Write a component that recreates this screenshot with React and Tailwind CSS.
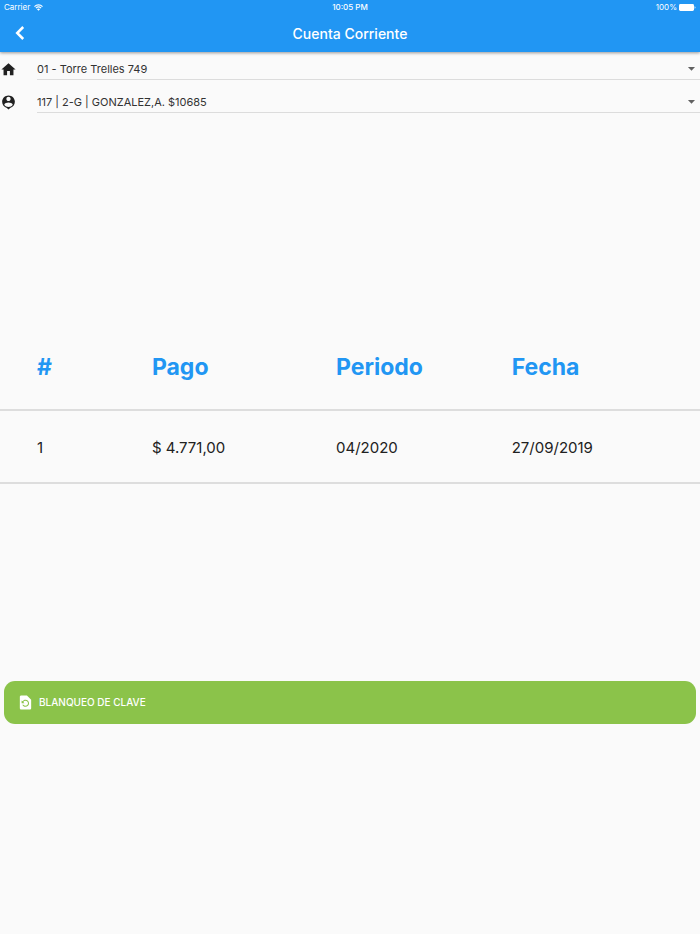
import { useState } from 'react';
import { MdArrowDropDown, MdHome, MdRestorePage } from 'react-icons/md';

const buildings = [{ id: '01', label: '01 - Torre Trelles 749' }];
const units = [{ id: '117', label: '117 | 2-G | GONZALEZ,A. $10685' }];
const payments = [{ id: 1, amount: '$ 4.771,00', period: '04/2020', date: '27/09/2019' }];

function PersonPinIcon({ className }) {
  return (
    <svg className={className} viewBox="0 0 24 24" fill="currentColor" aria-hidden="true">
      <path d="M12 2c-4.97 0-9 4.03-9 9 0 4.17 2.84 7.67 6.69 8.69L12 22l2.31-2.31C18.16 18.67 21 15.17 21 11c0-4.97-4.03-9-9-9zm0 2c1.66 0 3 1.34 3 3s-1.34 3-3 3-3-1.34-3-3 1.34-3 3-3zm0 14.3c-2.5 0-4.71-1.28-6-3.22.03-1.99 4-3.08 6-3.08 1.99 0 5.97 1.09 6 3.08-1.29 1.94-3.5 3.22-6 3.22z" />
    </svg>
  );
}

function StatusBar() {
  return (
    <div className="grid h-[14px] grid-cols-3 items-center px-1 text-[8px] leading-[14px]">
      <div className="flex items-center gap-1">
        <span>Carrier</span>
        <svg className="h-[7px] w-[9px]" viewBox="0 0 18 14" fill="none" stroke="currentColor" strokeWidth="2.4">
          <path d="M1 5.2C5.5.8 12.5.8 17 5.2M3.8 8.2c3-2.9 7.4-2.9 10.4 0" />
          <path d="M9 13.5 5.9 10.4c1.8-1.7 4.4-1.7 6.2 0z" fill="currentColor" stroke="none" />
        </svg>
      </div>
      <span className="text-center font-medium">10:05 PM</span>
      <div className="flex items-center justify-end gap-[2px]">
        <span>100%</span>
        <svg className="h-[7px] w-[17px]" viewBox="0 0 17 7" fill="currentColor">
          <rect width="15" height="7" rx="1.4" />
          <path d="M15.6 2.2c1.2.5 1.2 2.1 0 2.6z" />
        </svg>
      </div>
    </div>
  );
}

function SelectRow({ icon, label, options, value, onChange }) {
  return (
    <div className="flex items-center">
      <span className="w-[37px] shrink-0 text-[#212121]">{icon}</span>
      <div className="relative flex-1">
        <select
          aria-label={label}
          value={value}
          onChange={(e) => onChange(e.target.value)}
          className="block h-[22px] w-full appearance-none border-b border-[#dcdcdc] bg-transparent pt-px pr-5 text-[11px] text-[#333333] outline-none"
        >
          {options.map((option) => (
            <option key={option.id} value={option.id}>
              {option.label}
            </option>
          ))}
        </select>
        <MdArrowDropDown className="pointer-events-none absolute top-[2px] right-0 size-[17px] text-[#616161]" />
      </div>
    </div>
  );
}

export default function App() {
  const [building, setBuilding] = useState('01');
  const [unit, setUnit] = useState('117');

  return (
    <div className="flex min-h-screen flex-col bg-[#fafafa] font-['Inter',sans-serif] text-[#212121]">
      <header className="relative bg-[#2196f3] text-white shadow-[0_1px_3px_rgba(0,0,0,0.4)]">
        <StatusBar />
        <div className="grid h-[38px] grid-cols-[40px_1fr_40px] items-center">
          <button type="button" aria-label="Volver" className="flex h-full items-center justify-center">
            <svg className="size-[14px]" viewBox="0 0 14 14" fill="none" stroke="currentColor" strokeWidth="2.5">
              <path d="M10.2 1 4.2 7l6 6" />
            </svg>
          </button>
          <h1 className="text-center text-[14px] font-medium">Cuenta Corriente</h1>
        </div>
      </header>

      <main className="flex flex-1 flex-col">
        <div className="flex flex-col gap-[11px] pt-[6px]">
          <SelectRow
            icon={<MdHome className="size-[17px]" />}
            label="Edificio"
            options={buildings}
            value={building}
            onChange={setBuilding}
          />
          <SelectRow
            icon={<PersonPinIcon className="size-[17px]" />}
            label="Unidad"
            options={units}
            value={unit}
            onChange={setUnit}
          />
        </div>

        <section className="flex flex-1 items-center pt-[13px]">
          <table className="w-full table-fixed border-collapse text-left">
            <thead>
              <tr className="h-[86px] border-b-2 border-[#dddddd] text-[23px] text-[#2196f3]">
                <th className="w-[21.7%] pt-[2px] pl-[37px] font-bold">#</th>
                <th className="w-[26.3%] pt-[2px] font-bold">Pago</th>
                <th className="w-[25.1%] pt-[2px] font-bold">Periodo</th>
                <th className="pt-[2px] font-bold">Fecha</th>
              </tr>
            </thead>
            <tbody>
              {payments.map((payment) => (
                <tr key={payment.id} className="h-[73px] border-b-2 border-[#dddddd] text-[15px]">
                  <td className="pt-1 pl-[37px]">{payment.id}</td>
                  <td className="pt-1">{payment.amount}</td>
                  <td className="pt-1">{payment.period}</td>
                  <td className="pt-1">{payment.date}</td>
                </tr>
              ))}
            </tbody>
          </table>
        </section>

        <div className="px-1 pb-[210px]">
          <button
            type="button"
            className="flex h-[43px] w-full items-center gap-[5px] rounded-[11px] bg-[#8bc34a] px-[13px] text-[10px] font-medium text-white"
          >
            <MdRestorePage className="size-[17px]" />
            BLANQUEO DE CLAVE
          </button>
        </div>
      </main>
    </div>
  );
}
